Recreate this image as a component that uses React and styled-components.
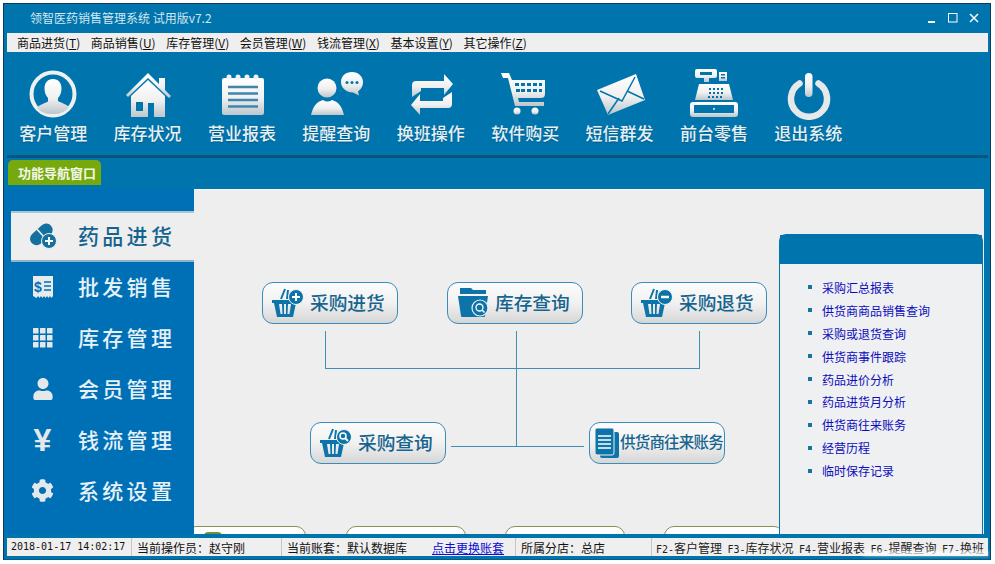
import React from 'react';
import styled, { createGlobalStyle } from 'styled-components';
import { FaCog, FaUser } from 'react-icons/fa';

const CJK = '"Noto Sans CJK SC", "Liberation Sans", sans-serif';
const BLUE = '#0075ad';

const GlobalStyle = createGlobalStyle`
  html, body {
    margin: 0;
    padding: 0;
    background: #fff;
    overflow: hidden;
    font-family: ${CJK};
  }
`;

const Win = styled.div`
  box-sizing: border-box;
  width: 988px;
  height: 557px;
  margin: 3px 0 0 3px;
  background: ${BLUE};
  border: 1px solid #0b3c5c;
  border-bottom-color: #0a5a86;
  display: flex;
  flex-direction: column;
`;

const TitleBar = styled.div`
  height: 29px;
  flex: none;
  display: flex;
  align-items: center;
  justify-content: space-between;
  padding: 0 11px 2px 26px;
  box-sizing: border-box;
  color: #d4e6f0;
  font-size: 12px;
`;

const WinButtons = styled.div`
  display: flex;
  align-items: center;
  gap: 11px;
`;

const MenuBar = styled.div`
  height: 19px;
  flex: none;
  margin: 0 2px 0 3px;
  padding-left: 10px;
  background: #efefef;
  display: flex;
  align-items: center;
  gap: 10.5px;
  font-size: 12px;
  color: #111;
`;

const MenuItem = styled.span`
  white-space: nowrap;
`;

const Toolbar = styled.div`
  height: 103px;
  flex: none;
  display: flex;
  padding-left: 2px;
`;

const ToolItem = styled.div`
  width: 94.4px;
  display: flex;
  flex-direction: column;
  align-items: center;
  padding-top: 16px;
`;

const ToolLabel = styled.div`
  margin-top: 2px;
  font-size: 17px;
  line-height: 22px;
  font-weight: 500;
  color: #e6eff4;
  text-shadow: 0 1px 1px rgba(0, 40, 70, 0.35);
  white-space: nowrap;
`;

const Band = styled.div`
  height: 3px;
  flex: none;
  margin: 0 2px 0 3px;
  background: linear-gradient(#0a5a84, #064f76);
`;

const TabRow = styled.div`
  height: 31px;
  flex: none;
  padding: 2px 0 0 4px;
  box-sizing: border-box;
`;

const Tab = styled.div`
  box-sizing: border-box;
  width: 93px;
  height: 25px;
  padding-left: 5px;
  border-radius: 5px 5px 0 0;
  background: #76a90e;
  color: #f4f7e6;
  font-size: 13px;
  font-weight: 700;
  display: flex;
  align-items: center;
  justify-content: center;
`;

const Main = styled.div`
  height: 345px;
  flex: none;
  display: flex;
  margin-right: 6px;
`;

const Sidebar = styled.div`
  width: 190px;
  flex: none;
  background: #0070b6;
  padding-top: 22px;
  box-sizing: border-box;
`;

const SideItem = styled.div`
  box-sizing: border-box;
  height: 51px;
  margin-left: 7px;
  display: flex;
  align-items: center;
  background: ${(props) => (props.$active ? '#eeeeee' : 'transparent')};
  border-top: 2px solid ${(props) => (props.$active ? '#a9c6d8' : 'transparent')};
  border-bottom: 2px solid ${(props) => (props.$active ? '#8fb3c9' : 'transparent')};
  color: ${(props) => (props.$active ? '#14638e' : '#e8f1f6')};
`;

const SideIcon = styled.span`
  width: 67px;
  padding: 0 15px 2px 11px;
  box-sizing: border-box;
  flex: none;
  display: flex;
  justify-content: center;
  align-items: center;
  color: #e4e8ea;
  font: 700 32px/1 "Liberation Sans", sans-serif;
`;

const SideLabel = styled.span`
  padding-bottom: 4px;
  font-size: 21px;
  font-weight: 500;
  letter-spacing: 3.3px;
  white-space: nowrap;
`;

const Canvas = styled.div`
  position: relative;
  flex: 1;
  background: #eeeeee;
  border-top: 1px solid #f8f8f8;
  box-sizing: border-box;
  overflow: hidden;
  display: flex;
  justify-content: flex-end;
  padding: 44px 1px 0 0;
`;

const FlowLine = styled.div`
  position: absolute;
  background: #3f8eb8;
  left: ${(props) => props.$x}px;
  top: ${(props) => props.$y}px;
  width: ${(props) => props.$w || 1}px;
  height: ${(props) => props.$h || 1}px;
`;

const FlowNode = styled.div`
  position: absolute;
  left: ${(props) => props.$x}px;
  top: ${(props) => props.$y}px;
  box-sizing: border-box;
  width: 136px;
  height: 42px;
  border: 1.5px solid #3a8dbb;
  border-radius: 11px;
  background: linear-gradient(#fbfbfb 0%, #f1f1f1 50%, #d6d6d6 100%);
  display: flex;
  align-items: center;
  padding-left: ${(props) => (props.$tight ? '5px' : '9px')};
  gap: ${(props) => (props.$tight ? '1px' : '6px')};
  color: #16648f;
  font-size: ${(props) => (props.$tight ? '15.5px' : '18.7px')};
  font-weight: 500;
  letter-spacing: ${(props) => (props.$tight ? '-0.8px' : '0')};
  white-space: nowrap;
`;

const NodeLabel = styled.span`
  padding-bottom: 4px;
`;

const ClippedCard = styled.div`
  position: absolute;
  left: ${(props) => props.$x}px;
  top: 336px;
  box-sizing: border-box;
  width: 120px;
  height: 40px;
  background: #fff;
  border: 1px solid #7f9555;
  border-radius: 10px;
`;

const CardDot = styled.span`
  display: block;
  width: 18px;
  height: 10px;
  margin: 5px 0 0 17px;
  border-radius: 4px;
  background: #6f8f3a;
`;

const SidePanel = styled.div`
  position: relative;
  z-index: 2;
  width: 204px;
  height: 320px;
  box-sizing: border-box;
  flex: none;
  border: 1px solid ${BLUE};
  border-bottom: 0;
  border-radius: 7px 7px 0 0;
  background: #eff0f2;
`;

const PanelHead = styled.div`
  height: 29px;
  background: ${BLUE};
`;

const PanelList = styled.ul`
  list-style: none;
  margin: 0;
  padding: 12px 0 0 28px;
`;

const PanelItem = styled.li`
  height: 22.9px;
  display: flex;
  align-items: center;
  gap: 10px;
  font-size: 12px;
  color: #0c0cbc;
  white-space: nowrap;
  &::before {
    content: '';
    width: 4px;
    height: 4px;
    background: #17749f;
  }
`;

const StatusBar = styled.div`
  height: 18px;
  flex: none;
  position: relative;
  margin: 4px 2px 0 3px;
  background: #efefef;
  display: flex;
  align-items: center;
  font-size: 12px;
  color: #111;
  white-space: nowrap;
`;

const StatusCell = styled.div`
  box-sizing: border-box;
  width: ${(props) => props.$w}px;
  flex: none;
  height: 100%;
  padding-left: ${(props) => props.$pad || 5}px;
  display: flex;
  align-items: center;
  border-right: 1px solid ${(props) => (props.$last ? 'transparent' : '#c6c6c6')};
`;

const Clock = styled.span`
  font: 10px/1 "DejaVu Sans Mono", monospace;
`;

const RefreshLink = styled.a`
  margin-left: 25px;
  color: #0b0bd8;
  text-decoration: underline;
`;

const HotKey = styled.span`
  margin-right: 5.4px;
  flex: none;
  font-size: 12px;
  color: #222;
`;

const KeyCode = styled.span`
  font: 10px/1 "DejaVu Sans Mono", monospace;
`;

const WatermarkSmear = styled.div`
  position: absolute;
  right: 0;
  bottom: 0;
  width: 125px;
  height: 5px;
  background: rgba(255, 255, 255, 0.65);
  filter: blur(1.5px);
`;

const Silver = () => (
  <defs>
    <linearGradient id="silver" x1="0" y1="0" x2="0" y2="1">
      <stop offset="0" stopColor="#ffffff" />
      <stop offset="0.55" stopColor="#f0f0f0" />
      <stop offset="1" stopColor="#bcc6cc" />
    </linearGradient>
  </defs>
);

const ToolSvg = ({ children }) => (
  <svg width="60" height="52" viewBox="0 0 60 52" fill="url(#silver)">
    <Silver />
    {children}
  </svg>
);

const icons = {
  client: (
    <ToolSvg>
      <circle cx="30" cy="26" r="21.5" fill="none" stroke="#eef0f1" strokeWidth="4" />
      <path d="M30 11c-5.500 0-8.500 4-8.500 9.500 0 4 1.500 7.500 3.500 9.500v3.500c-3 2-9 3-11 6.500A20 20 0 0 0 30 46a20 20 0 0 0 16-6.500c-2-3.500-8-4.500-11-6.500V30c2-2 3.500-5.500 3.500-9.500C38.500 15 35.500 11 30 11z" />
    </ToolSvg>
  ),
  house: (
    <ToolSvg>
      <path d="M8 27 30 5l11 11v-6h6v12l6 6-2 2-21-20L10 29z" />
      <path
        fillRule="evenodd"
        d="M13 28 30 12l17 16v21H36V35h-6v14H13zM18 34v9h7v-9z"
      />
    </ToolSvg>
  ),
  report: (
    <ToolSvg>
      <rect x="10" y="10" width="42" height="37" rx="2" />
      <circle cx="17" cy="9" r="2.500" fill="#f2f2f2" />
      <circle cx="26" cy="9" r="2.500" fill="#f2f2f2" />
      <circle cx="35" cy="9" r="2.500" fill="#f2f2f2" />
      <circle cx="44" cy="9" r="2.500" fill="#f2f2f2" />
      <path d="M16 19h30M16 25.500h30M16 32h30M16 38.500h30" stroke="#3f86ad" strokeWidth="2.400" />
    </ToolSvg>
  ),
  remind: (
    <ToolSvg>
      <circle cx="21" cy="20" r="9.500" />
      <path d="M5 47c2-8 5-13 12-15 3 2 6 2 9 0 7 2 10 7 12 15z" />
      <path d="M46 4c6.500 0 11 4.500 11 10 0 5-3 8-5 9.500l1 4-6-3c-6.500 0-12-4.500-12-10.500S39.500 4 46 4z" />
      <circle cx="41" cy="14.500" r="1.500" fill={BLUE} />
      <circle cx="46" cy="14.500" r="1.500" fill={BLUE} />
      <circle cx="51" cy="14.500" r="1.500" fill={BLUE} />
    </ToolSvg>
  ),
  exchange: (
    <ToolSvg>
      <path d="M11 29V17c0-2 1-4 4-4h28V6l9 10-9 11v-7H20v3z" />
      <path d="M51 24v12c0 2-1 4-4 4H19v7L10 37l9-11v7h23v-3z" />
    </ToolSvg>
  ),
  cart: (
    <ToolSvg>
      <path
        fillRule="evenodd"
        d="M6 5h8l3 7h33v14c0 3-2 4-4 4H23l1 4h25v4H20l-7-28H8zM20 15v3h4v-3zM26 15v3h4v-3zM32 15v3h4v-3zM38 15v3h4v-3zM44 15v3h3v-3zM21 21v3h4v-3zM26 21v3h4v-3zM32 21v3h4v-3zM38 21v3h4v-3zM44 21v3h3v-3z"
      />
      <circle cx="22" cy="43" r="3.500" />
      <circle cx="40" cy="43" r="3.500" />
    </ToolSvg>
  ),
  mail: (
    <ToolSvg>
      <path d="M7 22 46 6l9 26-37 15z" />
      <path d="M10 23 32 33 45 9M18 46 29 30M54 31 37 23" fill="none" stroke={BLUE} strokeWidth="1.500" />
    </ToolSvg>
  ),
  register: (
    <ToolSvg>
      <path fillRule="evenodd" d="M13 1h18a2 2 0 0 1 2 2v5a2 2 0 0 1-2 2h-6v4h-5v-4h-7a2 2 0 0 1-2-2V3a2 2 0 0 1 2-2zM16 4v3h12V4z" />
      <path fillRule="evenodd" d="M35 4h8v9h-8zM37 6v1.500h4V6zM37 9v1.500h4V9z" />
      <path
        fillRule="evenodd"
        d="M15 16h30l4 16H11zM25 20v2h2v-2zM29 20v2h2v-2zM33 20v2h2v-2zM37 20v2h2v-2zM25 24v2h2v-2zM29 24v2h2v-2zM33 24v2h2v-2zM37 24v2h2v-2zM24 28v2h2v-2zM28 28v2h2v-2zM32 28v2h2v-2zM36 28v2h2v-2z"
      />
      <path fillRule="evenodd" d="M9 34h42a3 3 0 0 1 3 3v9a3 3 0 0 1-3 3H9a3 3 0 0 1-3-3v-9a3 3 0 0 1 3-3zM10 37v8h40v-8z" />
      <circle cx="30" cy="41" r="1" />
    </ToolSvg>
  ),
  power: (
    <ToolSvg>
      <path d="M21.500 15.500a18 18 0 1 0 19 0" fill="none" stroke="#e6e8e9" strokeWidth="6.500" strokeLinecap="round" />
      <rect x="27" y="5" width="7.500" height="24" rx="3.750" />
    </ToolSvg>
  ),
};

const tools = [
  ['client', '客户管理'],
  ['house', '库存状况'],
  ['report', '营业报表'],
  ['remind', '提醒查询'],
  ['exchange', '换班操作'],
  ['cart', '软件购买'],
  ['mail', '短信群发'],
  ['register', '前台零售'],
  ['power', '退出系统'],
];

const menus = [
  ['商品进货', 'T'],
  ['商品销售', 'U'],
  ['库存管理', 'V'],
  ['会员管理', 'W'],
  ['钱流管理', 'X'],
  ['基本设置', 'Y'],
  ['其它操作', 'Z'],
];

const PillIcon = () => (
  <svg width="28" height="27" viewBox="0 0 28 27">
    <g transform="rotate(-42 12 12)">
      <rect x="-1" y="6" width="26" height="13" rx="6.500" fill="#14719f" />
      <rect x="11.500" y="6" width="1.500" height="13" fill="#eeeeee" />
    </g>
    <circle cx="20" cy="19" r="7.500" fill="#14719f" stroke="#eeeeee" strokeWidth="1" />
    <path d="M16 19h8M20 15v8" stroke="#fff" strokeWidth="2" />
  </svg>
);

const ReceiptIcon = () => (
  <svg width="22" height="22" viewBox="0 0 22 22">
    <path d="M1 0h20v20l-1.500 2-1.500-2-1.500 2-1.500-2-1.500 2-1.500-2-1.500 2-1.500-2-1.500 2-1.500-2-1.500 2L1 20z" fill="#e8ebec" />
    <text x="6" y="15.500" textAnchor="middle" fontFamily="Liberation Sans" fontWeight="700" fontSize="14" fill="#0070b6">$</text>
    <path d="M12 6h7M12 10h7M12 14h7" stroke="#0070b6" strokeWidth="1.500" />
  </svg>
);

const GridIcon = () => (
  <svg width="20" height="20" viewBox="0 0 20 20" fill="#e4e8ea">
    {[0, 7, 14].map((y) =>
      [0, 7, 14].map((x) => <rect key={`${x}-${y}`} x={x} y={y} width="5.500" height="5.500" rx="0.500" />)
    )}
  </svg>
);

const sideItems = [
  [<PillIcon />, '药品进货'],
  [<ReceiptIcon />, '批发销售'],
  [<GridIcon />, '库存管理'],
  [<FaUser size={22} />, '会员管理'],
  ['¥', '钱流管理'],
  [<FaCog size={23} />, '系统设置'],
];

const NodeSvg = ({ children }) => (
  <svg width="32" height="30" viewBox="0 0 32 30" fill="#0c74a8" style={{ flex: 'none' }}>
    {children}
  </svg>
);

const Basket = () => (
  <>
    <path d="M9 11 13 1M15 11l1-9" stroke="#0c74a8" strokeWidth="2" fill="none" />
    <path fillRule="evenodd" d="M0 12h25v3h-1l-3 14H5L2 15H0zM7 16l1.500 10h2L10 16zM12 16v10h2V16zM16 16l-.500 10h2L19 16z" />
  </>
);

const Badge = ({ children }) => (
  <>
    <circle cx="24" cy="9" r="7.500" fill="#0c74a8" stroke="#f4f4f4" strokeWidth="1" />
    {children}
  </>
);

const nodeIcons = {
  add: (
    <NodeSvg>
      <Basket />
      <Badge>
        <path d="M20 9h8M24 5v8" stroke="#fff" strokeWidth="2" />
      </Badge>
    </NodeSvg>
  ),
  minus: (
    <NodeSvg>
      <Basket />
      <Badge>
        <path d="M20 9h8" stroke="#fff" strokeWidth="2.500" />
      </Badge>
    </NodeSvg>
  ),
  search: (
    <NodeSvg>
      <Basket />
      <Badge>
        <circle cx="23" cy="8" r="3" fill="none" stroke="#fff" strokeWidth="1.500" />
        <path d="M25 10l3 3" stroke="#fff" strokeWidth="1.800" />
      </Badge>
    </NodeSvg>
  ),
  folder: (
    <NodeSvg>
      <path d="M3 0h11l2 2h13v4H3z" />
      <path d="M1 8h30l-3 20c0 1-1 1-2 1H6c-1 0-2 0-2-1z" />
      <circle cx="23" cy="20" r="8" fill="#0c74a8" stroke="#f0f0f0" strokeWidth="1.200" />
      <circle cx="22.500" cy="19.500" r="3.500" fill="none" stroke="#fff" strokeWidth="1.300" />
      <path d="M25 22l2.500 2.500" stroke="#fff" strokeWidth="1.500" />
    </NodeSvg>
  ),
  docs: (
    <svg width="24" height="30" viewBox="0 0 24 30" fill="#0c74a8" style={{ flex: 'none' }}>
      <rect x="5" y="4" width="19" height="26" rx="2" />
      <rect x="0" y="0" width="19" height="27" rx="2" stroke="#f0f0f0" strokeWidth="1" />
      <path d="M3 8h13M3 12h13M3 16h13M3 20h13" stroke="#fff" strokeWidth="1.300" />
    </svg>
  ),
};

const nodes = [
  { x: 68, y: 92, icon: 'add', label: '采购进货' },
  { x: 253, y: 92, icon: 'folder', label: '库存查询' },
  { x: 437, y: 92, icon: 'minus', label: '采购退货' },
  { x: 116, y: 232, icon: 'search', label: '采购查询' },
  { x: 395, y: 232, icon: 'docs', label: '供货商往来账务', tight: true },
];

const links = ['采购汇总报表', '供货商商品销售查询', '采购或退货查询', '供货商事件跟踪', '药品进价分析', '药品进货月分析', '供货商往来账务', '经营历程', '临时保存记录'];

const hotkeys = [
  ['F2-', '客户管理'],
  ['F3-', '库存状况'],
  ['F4-', '营业报表'],
  ['F6-', '提醒查询'],
  ['F7-', '换班'],
];

const App = () => {
  return (
    <Win>
      <GlobalStyle />
      <TitleBar>
        <span>领智医药销售管理系统 试用版v7.2</span>
        <WinButtons>
          <svg width="9" height="12" viewBox="0 0 9 12">
            <rect x="0" y="9" width="7" height="2" fill="#fff" />
          </svg>
          <svg width="10" height="10" viewBox="0 0 10 10">
            <rect x="0.500" y="0.500" width="8.500" height="8.500" fill="none" stroke="#fff" />
          </svg>
          <svg width="10" height="10" viewBox="0 0 10 10">
            <path d="M1 1l8 8M9 1l-8 8" stroke="#fff" strokeWidth="1.500" />
          </svg>
        </WinButtons>
      </TitleBar>

      <MenuBar>
        {menus.map(([name, key]) => (
          <MenuItem key={key}>
            {name}(<u>{key}</u>)
          </MenuItem>
        ))}
      </MenuBar>

      <Toolbar>
        {tools.map(([icon, label]) => (
          <ToolItem key={label}>
            {icons[icon]}
            <ToolLabel>{label}</ToolLabel>
          </ToolItem>
        ))}
      </Toolbar>
      <Band />

      <TabRow>
        <Tab>功能导航窗口</Tab>
      </TabRow>

      <Main>
        <Sidebar>
          {sideItems.map(([icon, label], idx) => (
            <SideItem key={label} $active={idx === 0}>
              <SideIcon>{icon}</SideIcon>
              <SideLabel>{label}</SideLabel>
            </SideItem>
          ))}
        </Sidebar>

        <Canvas>
          <FlowLine $x={131} $y={141} $h={37} />
          <FlowLine $x={322} $y={141} $h={116} />
          <FlowLine $x={505} $y={141} $h={37} />
          <FlowLine $x={131} $y={178} $w={375} />
          <FlowLine $x={257} $y={256} $w={133} />
          {nodes.map((node) => (
            <FlowNode key={node.label} $x={node.x} $y={node.y} $tight={node.tight}>
              {nodeIcons[node.icon]}
              <NodeLabel>{node.label}</NodeLabel>
            </FlowNode>
          ))}
          <ClippedCard $x={-8}>
            <CardDot />
          </ClippedCard>
          <ClippedCard $x={152} />
          <ClippedCard $x={311} />
          <ClippedCard $x={470} />
          <SidePanel>
            <PanelHead />
            <PanelList>
              {links.map((text) => (
                <PanelItem key={text}>{text}</PanelItem>
              ))}
            </PanelList>
          </SidePanel>
        </Canvas>
      </Main>

      <StatusBar>
        <StatusCell $w={125} $pad={4}>
          <Clock>2018-01-17 14:02:17</Clock>
        </StatusCell>
        <StatusCell $w={150}>当前操作员：赵守刚</StatusCell>
        <StatusCell $w={234}>
          当前账套：默认数据库
          <RefreshLink>点击更换账套</RefreshLink>
        </StatusCell>
        <StatusCell $w={136}>所属分店：总店</StatusCell>
        <StatusCell $w={336} $pad={4} $last>
          {hotkeys.map(([code, name]) => (
            <HotKey key={code}>
              <KeyCode>{code}</KeyCode>
              {name}
            </HotKey>
          ))}
        </StatusCell>
        <WatermarkSmear />
      </StatusBar>
    </Win>
  );
};

export default App;
